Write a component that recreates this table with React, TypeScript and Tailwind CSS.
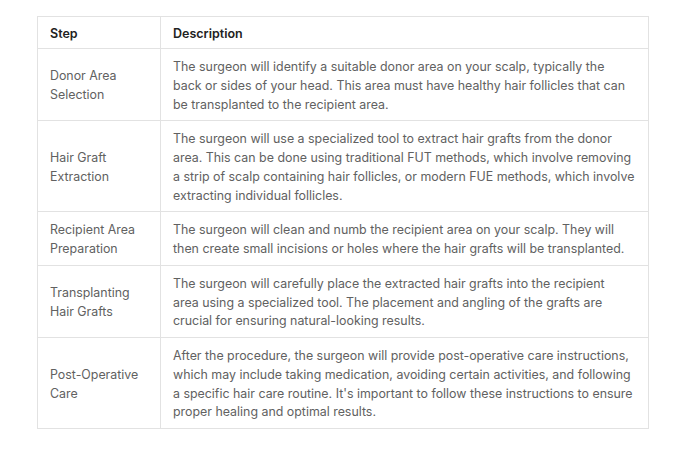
const rows = [
  {
    step: ["Donor Area", "Selection"],
    desc: [
      "The surgeon will identify a suitable donor area on your scalp, typically the",
      "back or sides of your head. This area must have healthy hair follicles that can",
      "be transplanted to the recipient area.",
    ],
  },
  {
    step: ["Hair Graft", "Extraction"],
    desc: [
      "The surgeon will use a specialized tool to extract hair grafts from the donor",
      "area. This can be done using traditional FUT methods, which involve removing",
      "a strip of scalp containing hair follicles, or modern FUE methods, which involve",
      "extracting individual follicles.",
    ],
  },
  {
    step: ["Recipient Area", "Preparation"],
    desc: [
      "The surgeon will clean and numb the recipient area on your scalp. They will",
      "then create small incisions or holes where the hair grafts will be transplanted.",
    ],
  },
  {
    step: ["Transplanting", "Hair Grafts"],
    desc: [
      "The surgeon will carefully place the extracted hair grafts into the recipient",
      "area using a specialized tool. The placement and angling of the grafts are",
      "crucial for ensuring natural-looking results.",
    ],
  },
  {
    step: ["Post-Operative", "Care"],
    desc: [
      "After the procedure, the surgeon will provide post-operative care instructions,",
      "which may include taking medication, avoiding certain activities, and following",
      "a specific hair care routine. It's important to follow these instructions to ensure",
      "proper healing and optimal results.",
    ],
  },
];

const App: React.FC = () => {
  return (
    <div className="w-[700px] h-[450px] bg-white pt-4 pl-[37px] font-['Inter',sans-serif]">
      <table className="w-[612px] border-collapse text-[12.4px] leading-[18.75px]">
        <thead>
          <tr>
            <th className="w-[123px] border border-[#e2e2e2] px-3 pt-[7px] pb-[5px] text-left text-[12.5px] leading-[19px] font-semibold text-[#222]">
              Step
            </th>
            <th className="border border-[#e2e2e2] px-3 pt-[7px] pb-[5px] text-left text-[12.5px] leading-[19px] font-semibold text-[#222]">
              Description
            </th>
          </tr>
        </thead>
        <tbody>
          {rows.map((r) => (
            <tr key={r.step[0]}>
              <td className="border border-[#e2e2e2] px-3 pt-[9px] pb-[6px] align-middle text-[#616161]">
                {r.step.map((s) => (
                  <span key={s} className="block whitespace-nowrap">
                    {s}
                  </span>
                ))}
              </td>
              <td className="border border-[#e2e2e2] px-3 pt-[9px] pb-[6px] text-[#616161]">
                {r.desc.map((line) => (
                  <span key={line} className="block whitespace-nowrap">
                    {line}
                  </span>
                ))}
              </td>
            </tr>
          ))}
        </tbody>
      </table>
    </div>
  );
};

export default App;
